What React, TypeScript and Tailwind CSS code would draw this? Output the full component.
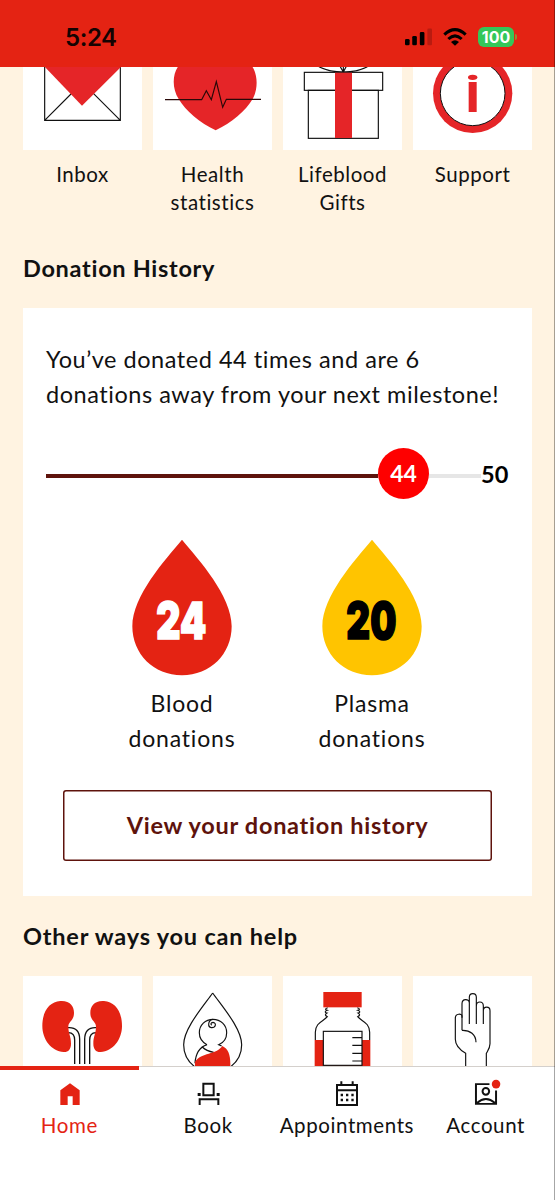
import React from "react";

type Tile = {
  label: string;
  icon: React.ReactNode;
};

const Envelope = () => (
  <svg viewBox="0 0 357 249" className="w-full h-full" fill="none" stroke="#111" strokeWidth="3.5">
    <path d="M65 -10V160H292V-10M65 160L150 75M292 160L205 73" />
    <path d="M56 -10L177 116L304 -10Z" fill="#e52528" stroke="none" />
  </svg>
);

const HeartRate = () => (
  <svg viewBox="0 0 357 249" className="w-full h-full" fill="none">
    <path
      d="M75 -1C58 23 57 65 77 96C97 130 141 168 188 190C235 168 279 130 299 96C315 67 315 25 298 -1Z"
      fill="#e52528"
    />
    <path d="M36 98H146L160 71L175 98L190 44L209 121L220 97H324" stroke="#2a0808" strokeWidth="3.5" />
  </svg>
);

const Gift = () => (
  <svg viewBox="0 0 357 249" className="w-full h-full" fill="none" stroke="#111" strokeWidth="3.5">
    <path d="M108 -1Q135 14 181 15Q227 14 253 -1M170 -4L181 15L191 -4M181 15V-4" />
    <rect x="64" y="16" width="235" height="54" />
    <rect x="76" y="70" width="210" height="144" />
    <rect x="156" y="17" width="51" height="196" fill="#e52528" stroke="none" />
  </svg>
);

const Info = () => (
  <svg viewBox="0 0 357 249" className="w-full h-full">
    <circle cx="179" cy="79" r="119" fill="#e52528" />
    <circle cx="179" cy="79" r="97" fill="#fff" stroke="#111" strokeWidth="3" />
    <ellipse cx="179" cy="31" rx="14" ry="8" fill="#e52528" />
    <rect x="167" y="45" width="24" height="90" fill="#e52528" />
  </svg>
);

const Kidney = () => (
  <g>
    <path d="M134 155C160 153 170 168 170 190V264M134 170C150 169 155 179 155 192V264" fill="none" stroke="#111" strokeWidth="4" />
    <path
      d="M112 75C140 73 153 90 153 110C153 135 136 136 136 152C136 172 144 180 144 203C144 220 135 229 122 228C85 226 58 190 58 150C58 105 80 77 112 75Z"
      fill="#e42313"
    />
  </g>
);

const Kidneys = () => (
  <svg viewBox="0 0 357 270" className="w-full h-full">
    <Kidney />
    <g transform="translate(355 0) scale(-1 1)">
      <Kidney />
    </g>
  </svg>
);

const Baby = () => (
  <svg viewBox="0 0 357 270" className="w-full h-full" fill="none" stroke="#111" strokeWidth="3.5">
    <path d="M179 51C150 92 92 158 92 206C92 232 105 256 124 271M179 51C208 92 266 158 266 206C266 232 253 256 234 271" />
    <path d="M162 206C147 198 139 185 139 170C139 147 157 130 180 130C203 130 221 147 221 170C221 186 211 200 197 206L206 210" />
    <path d="M180 130C166 131 162 152 175 155C188 156 192 141 180 139C173 139 172 146 177 147" />
    <path d="M162 206C138 214 128 232 126 262M148 213Q160 225 182 229" />
    <path d="M126 271V258C145 228 190 237 208 210C226 219 233 236 232 271Z" fill="#e42313" stroke="none" />
  </svg>
);

const Bottle = () => (
  <svg viewBox="0 0 357 270" className="w-full h-full" fill="none" stroke="#111" strokeWidth="3.5">
    <rect x="121" y="48" width="115" height="46" fill="#e42313" stroke="none" />
    <path d="M134 95Q122 100 133 103Q121 108 132 111Q122 117 133 122C122 136 97 139 97 169V192" />
    <path d="M223 95Q235 100 224 103Q236 108 225 111Q235 117 224 122C235 136 260 139 260 169V192" />
    <path d="M95 192H262V271H95Z" fill="#e42313" stroke="none" />
    <rect x="121" y="166" width="116" height="102" fill="#fff" />
    <path d="M208 185H237M208 208H237M208 232H237M208 255H237" />
  </svg>
);

const Hand = () => (
  <svg viewBox="0 0 357 270" className="w-full h-full" fill="none" stroke="#111" strokeWidth="3.5">
    <path d="M158 271V232C139 221 127 208 127 190V126C127 112 147 112 147 120V163" />
    <path d="M147 125V83C147 67 169 67 169 81V144M169 81V64C169 49 190 49 190 64V144M190 90C190 74 211 74 211 90V144M211 104C211 90 231 90 231 104V203C231 216 225 223 220 232V271" />
    <path d="M147 163C171 162 189 175 189 199" />
  </svg>
);

const shortcuts: Tile[] = [
  { label: "Inbox", icon: <Envelope /> },
  { label: "Health statistics", icon: <HeartRate /> },
  { label: "Lifeblood Gifts", icon: <Gift /> },
  { label: "Support", icon: <Info /> },
];

const waysToHelp = [<Kidneys />, <Baby />, <Bottle />, <Hand />];

const StatusBar = () => (
  <header className="h-[67px] shrink-0 bg-[#e42313] flex justify-between items-start pt-[24px] pl-[65px] pr-[38px]">
    <span className="font-['Inter',sans-serif] font-semibold text-[24px] leading-[27px] tracking-[-0.4px] text-[#150302]">
      5:24
    </span>
    <div className="flex items-center gap-[11px] h-[26px]">
      <svg viewBox="0 0 82 54" className="w-[27px] h-[18px]">
        <rect x="0" y="33" width="14" height="19" rx="4" />
        <rect x="22" y="24" width="14" height="28" rx="4" />
        <rect x="45" y="12" width="14" height="40" rx="4" />
        <rect x="68" y="1" width="14" height="51" rx="4" fill="#b91b10" />
      </svg>
      <svg viewBox="0 0 72 54" className="w-[24px] h-[18px]" fill="none" stroke="#000" strokeWidth="9">
        <path d="M4 20Q36 -10 68 20M16 33Q36 14 56 33" />
        <path d="M36 53L24 42Q36 32 48 42Z" fill="#000" stroke="none" />
      </svg>
      <div className="flex items-center gap-px">
        <div className="w-[36px] h-[20px] rounded-[6px] bg-[#34c759] text-white font-['Inter',sans-serif] font-bold text-[16px] leading-[20px] text-center">
          100
        </div>
        <div className="w-[2px] h-[6px] rounded-r-full bg-[#8f8f30]" />
      </div>
    </div>
  </header>
);

const Drop: React.FC<{ count: number; label: string; fill: string; color: string }> = ({ count, label, fill, color }) => (
  <div className="w-[120px] flex flex-col items-center">
    <svg viewBox="0 0 300 411" className="w-[100px] h-[137px]">
      <path d="M150 2C200 62 299 170 299 262C299 345 235 409 150 409C65 409 1 345 1 262C1 170 100 62 150 2Z" fill={fill} />
      <text
        x="73"
        y="301"
        textLength="150"
        lengthAdjust="spacingAndGlyphs"
        fill={color}
        stroke={color}
        strokeWidth="5"
        className="font-['Inter',sans-serif] font-black text-[154px]"
      >
        {count}
      </text>
    </svg>
    <p className="mt-[10px] text-center text-[23px] leading-[35px] tracking-[0.8px]">
      {label}
      <br />
      donations
    </p>
  </div>
);

const HomeIcon = () => (
  <svg viewBox="0 0 72 78" className="w-[24px] h-[26px] ml-[2px]">
    <path d="M7 72V28L36 7L65 28V72H44V46H29V72Z" fill="#e42313" />
  </svg>
);

const ChairIcon = () => (
  <svg viewBox="0 0 72 78" className="w-[24px] h-[26px] ml-[2px]" fill="none" stroke="#111" strokeWidth="6">
    <path d="M19 8H50V43H19ZM8 72V55H64V72" />
    <path d="M2 36H11V45H2ZM59 36H68V45H59Z" fill="#111" stroke="none" />
  </svg>
);

const CalendarIcon = () => (
  <svg viewBox="0 0 72 78" className="w-[24px] h-[26px]" fill="none" stroke="#111" strokeWidth="6">
    <path d="M6 12H66V72H6ZM6 28H66M19 1V12M53 1V12" />
    <path d="M17 42H24M33 42H40M49 42H56M17 57H24M33 57H40M49 57H56" strokeWidth="7" />
  </svg>
);

const AccountIcon = () => (
  <svg viewBox="0 0 82 78" className="w-[27px] h-[26px] ml-[1px] overflow-visible" fill="none" stroke="#111" strokeWidth="6">
    <path d="M50 9H9V69H70V28M12 66Q39 42 67 66" />
    <circle cx="39" cy="31" r="10" />
    <circle cx="70" cy="9" r="13" fill="#e42313" stroke="none" />
  </svg>
);

const tabs = [
  { label: "Home", icon: <HomeIcon />, active: true },
  { label: "Book", icon: <ChairIcon />, active: false },
  { label: "Appointments", icon: <CalendarIcon />, active: false },
  { label: "Account", icon: <AccountIcon />, active: false },
];

const App: React.FC = () => {
  return (
    <div className="relative w-[555px] h-[1200px] overflow-hidden flex flex-col bg-[#fff3e1] text-[#111] font-['Lato',sans-serif]">
      <StatusBar />

      <main className="flex-1 min-h-0 overflow-hidden px-[23px]">
        <div className="grid grid-cols-4 gap-[11px] w-[509px] h-[173px]">
          {shortcuts.map((tile) => (
            <div key={tile.label} className="flex flex-col">
              <div className="h-[83px] bg-white">{tile.icon}</div>
              <p className="mt-[11px] px-2 text-center text-[20.5px] leading-[27.5px] tracking-[0.55px]">{tile.label}</p>
            </div>
          ))}
        </div>

        <h2 className="mt-[13px] text-[23.5px] leading-[30px] font-bold tracking-[0.7px]">Donation History</h2>

        <section className="mt-[25px] w-[509px] h-[588px] bg-white px-[23px] pt-[34px]">
          <p className="text-[23.5px] leading-[35px] tracking-[0.54px] whitespace-nowrap">
            You’ve donated 44 times and are 6
            <br />
            donations away from your next milestone!
          </p>

          <div className="mt-[35px] flex items-center h-[52px]">
            <div className="w-[332px] h-[4px] mt-[5px] bg-[#5e130c]" />
            <div className="size-[51px] shrink-0 rounded-full bg-[#fe0000] text-white text-[23px] font-bold flex items-center justify-center">
              44
            </div>
            <div className="w-[52px] h-[4px] mt-[5px] bg-[#e6e6e6]" />
            <span className="text-[23.5px] font-bold mt-[4px] text-black">50</span>
          </div>

          <div className="mt-[40px] flex justify-center gap-[70px] w-[462px]">
            <Drop count={24} label="Blood" fill="#e42313" color="#fff" />
            <Drop count={20} label="Plasma" fill="#ffc400" color="#000" />
          </div>

          <button className="mt-[34px] ml-[17px] w-[429px] h-[71px] rounded-[3px] shadow-[inset_0_0_0_1.5px_#5e130c] text-[#5e130c] text-[23.5px] font-bold tracking-[0.72px]">
            View your donation history
          </button>
        </section>

        <h2 className="mt-[25px] text-[23.5px] leading-[30px] font-bold tracking-[0.8px]">Other ways you can help</h2>

        <div className="mt-[25px] grid grid-cols-4 gap-[11px] w-[509px]">
          {waysToHelp.map((icon, index) => (
            <div key={index} className="h-[90px] bg-white">
              {icon}
            </div>
          ))}
        </div>
      </main>

      <nav className="h-[134px] shrink-0 bg-white grid grid-cols-4">
        {tabs.map((tab) => (
          <div
            key={tab.label}
            className={
              tab.active
                ? "flex flex-col items-center border-t-4 border-[#e42313] text-[#e42313] pt-[11px]"
                : "flex flex-col items-center border-t border-[#d4d0cc] pt-[14px]"
            }
          >
            {tab.icon}
            <span className="mt-[5px] text-[20.5px] leading-[27px] tracking-[0.6px]">{tab.label}</span>
          </div>
        ))}
      </nav>

      <div className="absolute inset-y-0 right-0 w-px bg-black/35" />
    </div>
  );
};

export default App;
